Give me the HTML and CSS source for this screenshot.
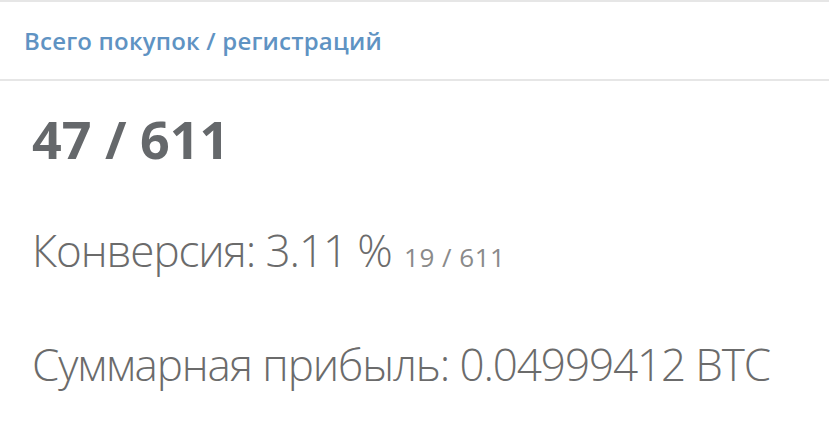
FILE: index.html
```html
<!DOCTYPE html>
<html lang="ru">
<head>
<meta charset="utf-8">
<title>Всего покупок / регистраций</title>
<link rel="stylesheet" href="styles.css">
</head>
<body>
<section class="card">
  <header class="card-head">
    <h2 class="card-title">Всего покупок / регистраций</h2>
  </header>
  <div class="card-body">
    <div class="total">47 / 611</div>
    <div class="stat">Конверсия: 3.11 % <small class="stat-sub">19 / 611</small></div>
    <div class="stat">Суммарная прибыль: 0.04999412 BTC</div>
  </div>
</section>
</body>
</html>
```

FILE: styles.css
```css
html, body {
  margin: 0;
  padding: 0;
  background: #fff;
}

body {
  font-family: "Open Sans", "Liberation Sans", sans-serif;
  width: 830px;
  height: 436px;
  overflow: hidden;
}

.card {
  border-top: 2px solid #e6e6e6;
  margin-right: 1px;
}

.card-head {
  height: 77px;
  display: flex;
  align-items: center;
  padding: 0 24px;
  border-bottom: 2px solid #e6e6e6;
}

.card-title {
  margin: 0;
  font-size: 24px;
  font-weight: 600;
  letter-spacing: 0.2px;
  color: #5f93c3;
}

.card-body {
  padding: 22px 32px 0;
  display: flex;
  flex-direction: column;
}

.total {
  font-size: 52px;
  font-weight: 700;
  color: #65686b;
  line-height: 72px;
}

.stat {
  font-size: 44px;
  font-weight: 300;
  letter-spacing: -1.1px;
  color: #6b6b6b;
  line-height: 60px;
  margin-top: 47px;
  white-space: nowrap;
}

.total + .stat {
  margin-top: 45px;
}

.stat-sub {
  margin-left: 2px;
  font-size: 26px;
  font-weight: 400;
  letter-spacing: 0.5px;
  color: #8a8a8a;
}
```
